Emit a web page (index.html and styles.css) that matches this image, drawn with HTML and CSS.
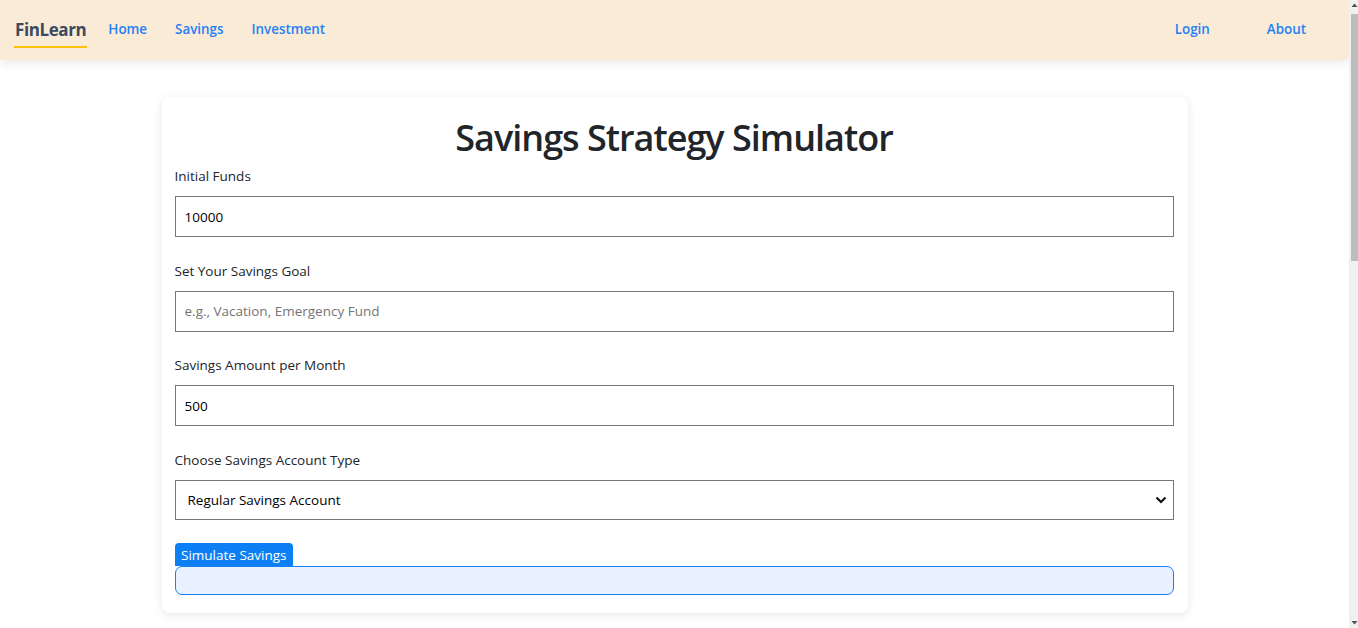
FILE: index.html
```html
<!DOCTYPE html>
<html lang="en">
<head>
<meta charset="utf-8">
<title>FinLearn - Savings Strategy Simulator</title>
<link rel="stylesheet" href="styles.css">
</head>
<body>
<nav class="navbar">
  <div class="nav-left">
    <a class="brand" href="#">FinLearn</a>
    <a class="nav-link" href="#">Home</a>
    <a class="nav-link" href="#">Savings</a>
    <a class="nav-link" href="#">Investment</a>
  </div>
  <div class="nav-right">
    <a class="nav-link" href="#">Login</a>
    <a class="nav-link" href="#">About</a>
  </div>
</nav>
<main class="page">
  <section class="card">
    <h1 class="title">Savings Strategy Simulator</h1>
    <form class="form">
      <div class="field">
        <label class="label" for="funds">Initial Funds</label>
        <input class="input" id="funds" type="text" value="10000">
      </div>
      <div class="field">
        <label class="label" for="goal">Set Your Savings Goal</label>
        <input class="input" id="goal" type="text" placeholder="e.g., Vacation, Emergency Fund">
      </div>
      <div class="field">
        <label class="label" for="amount">Savings Amount per Month</label>
        <input class="input" id="amount" type="text" value="500">
      </div>
      <div class="field">
        <label class="label" for="type">Choose Savings Account Type</label>
        <div class="select-wrap">
          <select class="select" id="type">
            <option>Regular Savings Account</option>
          </select>
          <svg class="chev" width="12" height="8" viewBox="0 0 12 8"><path d="M1.5 1.5 L6 6 L10.5 1.5" fill="none" stroke="#111" stroke-width="2.2"/></svg>
        </div>
      </div>
      <div class="actions">
        <button class="btn" type="button">Simulate Savings</button>
        <div class="result"></div>
      </div>
    </form>
  </section>
</main>
<div class="scrollbar" aria-hidden="true">
  <svg class="sb-arrow sb-up" width="7" height="6" viewBox="0 0 7 6"><path d="M0.5 5 L3.5 1.5 L6.5 5 Z" fill="#505050"/></svg>
  <div class="sb-thumb"></div>
  <svg class="sb-arrow sb-down" width="7" height="6" viewBox="0 0 7 6"><path d="M0.5 1 L3.5 4.5 L6.5 1 Z" fill="#505050"/></svg>
</div>
</body>
</html>
```
FILE: styles.css
```css
* { box-sizing: border-box; }
html, body { margin: 0; padding: 0; }
body {
  font-family: "Open Sans", "Noto Sans", sans-serif;
  color: #212529;
  background: #fff;
  min-height: 700px;
  margin-right: 9px;
}
.navbar {
  height: 60px;
  background: #faebd7;
  display: flex;
  justify-content: space-between;
  align-items: center;
  padding: 0 0 0 14px;
  box-shadow: 0 4px 10px rgba(0,0,0,0.08);
  border-bottom-right-radius: 6px;
}
.nav-left, .nav-right { display: flex; align-items: center; }
.brand {
  font-weight: 700;
  font-size: 17px;
  color: #3b4a5e;
  text-decoration: none;
  padding: 6px 1px 5px;
  border-bottom: 2px solid #ffc107;
  letter-spacing: -0.4px;
}
.nav-left .nav-link { margin-left: 21px; margin-right: 7px; }
.nav-link {
  color: #2680f5;
  font-size: 13.4px;
  font-weight: 600;
  text-decoration: none;
  margin-top: -3px;
}
.nav-right .nav-link { margin-right: 43px; }
.nav-right .nav-link + .nav-link { margin-left: 14px; }
.page {
  display: flex;
  justify-content: center;
  padding-top: 37px;
}
.card {
  width: 1026px;
  background: #fff;
  border-radius: 8px;
  box-shadow: 0 2px 10px rgba(0,0,0,0.1);
  padding: 19px 14px 18px 13px;
}
.title {
  margin: 0 0 7px;
  text-align: center;
  font-size: 36px;
  font-weight: 600;
  letter-spacing: -1px;
  line-height: 1.2;
  color: #212529;
}
.field { margin-bottom: 23.5px; }
.label {
  display: block;
  font-size: 13.5px;
  color: #212529;
  line-height: 20px;
  margin-bottom: 10px;
}
.input, .select {
  width: 100%;
  height: 41px;
  border: 1px solid #767676;
  border-radius: 0;
  padding: 0 9px;
  font-family: inherit;
  font-size: 13.5px;
  color: #000;
  background: #fff;
  outline: none;
}
.input::placeholder { color: #757575; }
.select-wrap { position: relative; }
.select {
  appearance: none;
  -webkit-appearance: none;
  height: 40px;
  padding: 0 12px;
}
.chev { position: absolute; right: 7px; top: 16px; pointer-events: none; }
.btn {
  display: block;
  background: #0d7ff5;
  color: #fff;
  border: none;
  border-radius: 4px 4px 0 0;
  font-family: inherit;
  font-size: 13.5px;
  height: 23px;
  padding: 0 6.5px;
}
.result {
  height: 29px;
  background: #e8f1ff;
  border: 1px solid #1a7ff0;
  border-radius: 7px;
}
.scrollbar {
  position: fixed;
  top: 0;
  right: 0;
  bottom: 0;
  width: 9px;
  background: #f0f0f0;
  display: flex;
  flex-direction: column;
  align-items: flex-end;
}
.sb-up { margin-top: 2px; }
.sb-thumb {
  width: 7px;
  height: 247px;
  margin-top: 6px;
  background: #bdbdbd;
}
.sb-down { margin-top: auto; margin-bottom: 2px; }
```
